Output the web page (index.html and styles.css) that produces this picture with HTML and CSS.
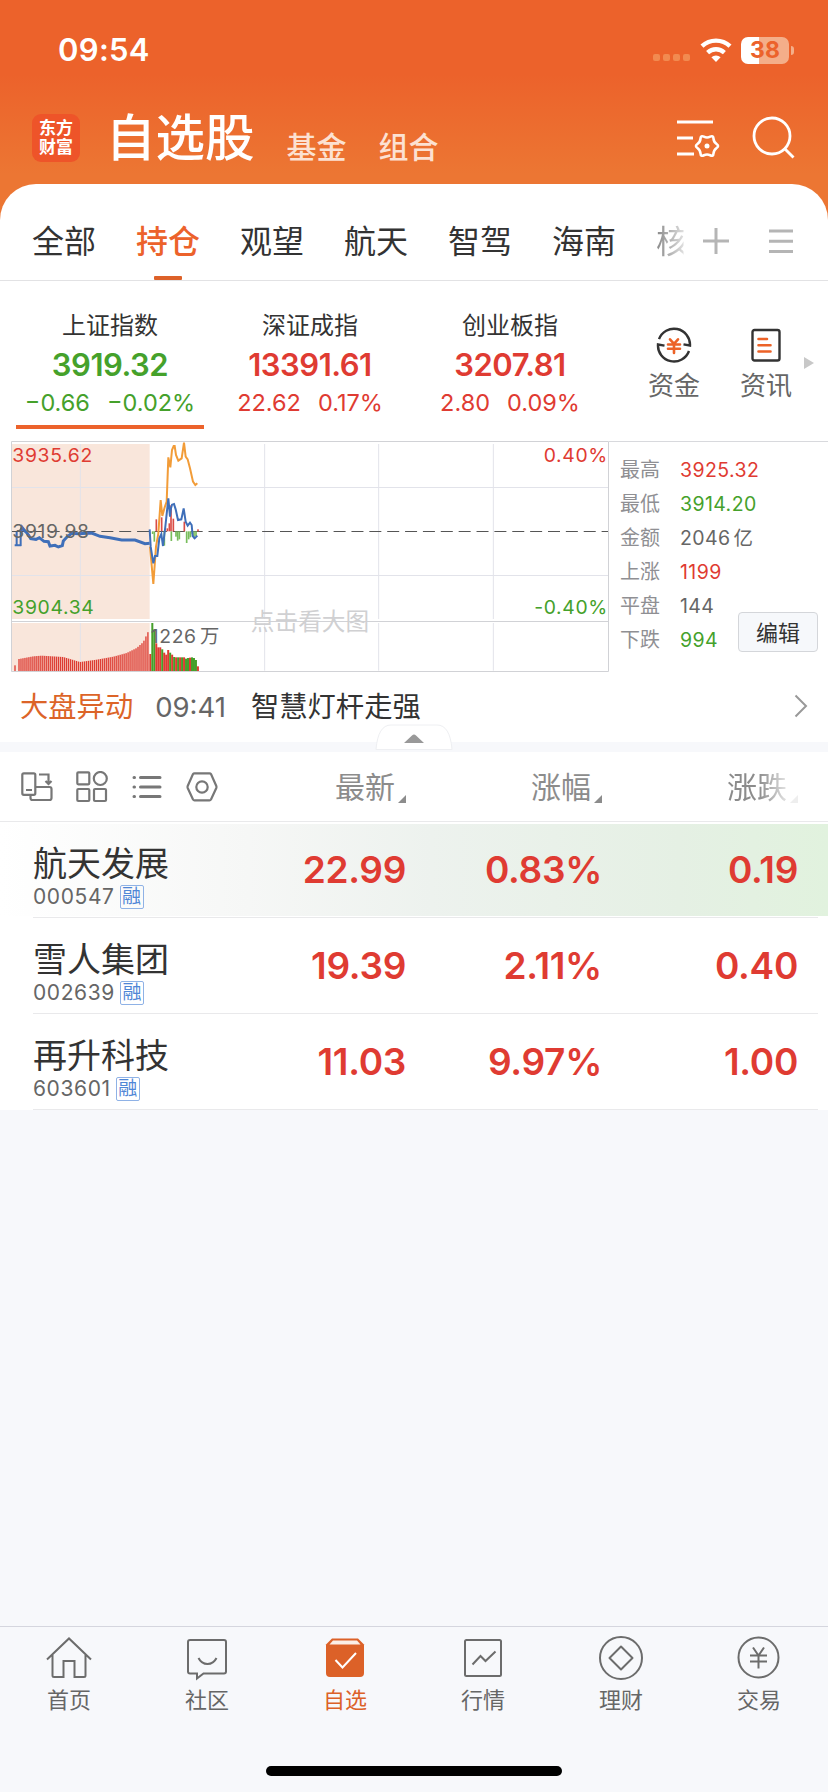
FILE: index.html
```html
<!DOCTYPE html>
<html lang="zh-CN">
<head>
    <meta charset="UTF-8">
    <meta name="viewport" content="width=device-width, initial-scale=1.0">
    <title>自选股</title>
    <link rel="stylesheet" href="styles.css">
</head>
<body>
    <div class="app">
        <header class="header">
            <div class="status-bar">
                <span class="time">09:54</span>
                <div class="status-icons">
                    <svg class="signal" width="38" height="8" viewBox="0 0 38 8"><rect width="7" height="7" rx="2"/><rect x="10" width="7" height="7" rx="2"/><rect x="20" width="7" height="7" rx="2"/><rect x="30" width="7" height="7" rx="2"/></svg>
                    <svg class="wifi" width="32" height="24" viewBox="0 0 32 24">
                        <path d="M2 8.2a20.5 20.5 0 0 1 28 0" fill="none" stroke="#fff" stroke-width="4.4"/>
                        <path d="M7.6 14.6a12.4 12.4 0 0 1 16.8 0" fill="none" stroke="#fff" stroke-width="4.4"/>
                        <path d="M11.4 19.3a6.8 6.8 0 0 1 9.2 0L16 24z" fill="#fff"/>
                    </svg>
                    <div class="battery"><span>38</span></div>
                    <i class="battery-tip"></i>
                </div>
            </div>
            <div class="title-bar">
                <div class="logo">东方<br>财富</div>
                <h1>自选股</h1>
                <a class="nav-link">基金</a>
                <a class="nav-link">组合</a>
                <svg class="settings-icon" width="44" height="40" viewBox="0 0 44 40" fill="none" stroke="#fff" stroke-width="3">
                    <path d="M1 4h36M1 20h16M1 36h17"/>
                    <path d="M40.6 30Q43.5 28 40.6 26Q37.8 24.1 37.5 20.600Q37.3 17.200 34.2 18.700Q31 20.200 27.9 18.700Q24.700 17.200 24.500 20.600Q24.200 24.100 21.400 26Q18.500 28 21.400 30Q24.200 31.900 24.500 35.400Q24.700 38.800 27.900 37.300Q31 35.800 34.200 37.300Q37.300 38.800 37.500 35.400Q37.800 31.900 40.600 30z" stroke-width="2.600"/>
                    <circle cx="31" cy="28" r="2.500" fill="#fff" stroke="none"/>
                </svg>
                <svg class="search-icon" width="44" height="44" viewBox="0 0 44 44" fill="none" stroke="#fff" stroke-width="2.800">
                    <circle cx="21" cy="21" r="18"/>
                    <path d="M33.500 33.500l9 9"/>
                </svg>
            </div>
        </header>

        <main class="panel">
            <nav class="tabs">
                <a>全部</a>
                <a class="active">持仓</a>
                <a>观望</a>
                <a>航天</a>
                <a>智驾</a>
                <a>海南</a>
                <a class="cut">核</a>
                <svg class="plus" width="26" height="26" viewBox="0 0 26 26"><path d="M0 13h26M13 0v26"/></svg>
                <svg class="menu" width="24" height="26" viewBox="0 0 24 26"><path d="M0 3h24M0 13.300h24M0 23.600h24"/></svg>
            </nav>

            <section class="indexes">
                <div class="index down current">
                    <div class="name">上证指数</div>
                    <div class="point">3919.32</div>
                    <div class="change"><span>−0.66</span><span>−0.02%</span></div>
                </div>
                <div class="index up">
                    <div class="name">深证成指</div>
                    <div class="point">13391.61</div>
                    <div class="change"><span>22.62</span><span>0.17%</span></div>
                </div>
                <div class="index up">
                    <div class="name">创业板指</div>
                    <div class="point">3207.81</div>
                    <div class="change"><span>2.80</span><span>0.09%</span></div>
                </div>
                <div class="quick">
                    <svg width="36" height="36" viewBox="0 0 36 36" fill="none" stroke="#333" stroke-width="2.400">
                        <path d="M3 12.200A16 16 0 0 1 34 18.500L27.500 17.400"/>
                        <path d="M33 24A16 16 0 0 1 2 17.500L8.500 18.600"/>
                        <path d="M14 12.300l4 4.500 4-4.500M12 17.500h12M12 21.800h12M18 17v9" stroke="#ec6227" stroke-width="2.600" stroke-linecap="round"/>
                    </svg>
                    <span>资金</span>
                </div>
                <div class="quick">
                    <svg width="36" height="36" viewBox="0 0 36 36" fill="none" stroke="#333" stroke-width="2.400">
                        <rect x="4.500" y="3" width="27" height="30.500" rx="2"/>
                        <path d="M10.500 12h8.500M10.500 18.300h12M10.500 24.500h12" stroke="#ec6227" stroke-width="2.600" stroke-linecap="round"/>
                    </svg>
                    <span>资讯</span>
                </div>
                <i class="more-arrow"></i>
            </section>

            <section class="market">
                <svg class="chart" width="598" height="231" viewBox="33 33 1794 693">
                    <path class="auction" d="M36 42H449V567H36zM36 579H449V722H36z"/>
                    <path class="grid" d="M241 42V567M241 579V722M794 42V567M794 579V722M1136 42V567M1136 579V722M1480 42V567M1480 579V722M36 172.500H1825M36 436.500H1825"/>
                    <path class="frame" d="M34.500 34.500H1825.500V724.500H34.500zM34.500 574.500H1825.500"/>
                    <path class="middle" d="M36 304.500H1824"/>
                    <g id="bars"></g>
                    <polyline class="average" points="450,350 460,462 468,350 475,310 482,210 487,258 494,232 500,215 505,82 511,112 516,60 521,48 524,48 528,75 535,92 545,85 552,38 557,80 563,88 570,115 579,155 586,165 592,160"/>
                    <polyline class="price pre" points="62,304 66,292 74,302 80,308 86,316 92,326 108,328 118,323 132,334 145,335 150,348 165,346 175,351 187,347 190,333 200,322 215,310 235,311 275,309 300,319 330,323 365,330 405,330 435,341 449,340"/>
                    <path class="price" d="M44 346H64M50 348V305M62 348V304"/>
                    <polyline class="price" points="449,298 452,350 460,400 465,378 472,378 478,325 484,312 489,348 496,290 505,205 510,260 513,235 516,224 522,222 527,238 534,270 544,268 551,235 557,275 563,287 570,278 575,285 578,318 584,325 592,317"/>
                    <text class="red" x="37" y="97">3935.62</text>
                    <text class="gray" x="37" y="325">3919.98</text>
                    <text class="green" x="37" y="552">3904.34</text>
                    <text class="red" x="1824" y="97" text-anchor="end">0.40%</text>
                    <text class="green" x="1824" y="552" text-anchor="end">-0.40%</text>
                    <text class="gray" x="452" y="640">1226<tspan dx="10">万</tspan></text>
                    <text class="hint" x="930" y="600" text-anchor="middle">点击看大图</text>
                </svg>
                <div class="stats">
                    <div><label>最高</label><b class="red">3925.32</b></div>
                    <div><label>最低</label><b class="green">3914.20</b></div>
                    <div><label>金额</label><b>2046<em>亿</em></b></div>
                    <div><label>上涨</label><b class="red">1199</b></div>
                    <div><label>平盘</label><b>144</b></div>
                    <div><label>下跌</label><b class="green">994</b></div>
                    <button>编辑</button>
                </div>
            </section>

            <section class="news">
                <span class="news-tag">大盘异动</span>
                <span class="news-time">09:41</span>
                <span class="news-title">智慧灯杆走强</span>
                <svg class="chevron" width="14" height="24" viewBox="0 0 14 24"><path d="M1.500 1.500L12 12 1.500 22.500"/></svg>
            </section>
            <div class="divider">
                <svg class="fold" width="78" height="27" viewBox="0 0 78 27">
                    <path d="M1 25.500Q3 1 16 1H62Q75 1 77 25.500z" fill="#fff" stroke="#eeeff2"/>
                    <path d="M29 19L37 11.500Q39 9.500 41 11.500L49 19z" fill="#999"/>
                </svg>
            </div>

            <section class="toolbar">
                <svg width="32" height="32" viewBox="0 0 32 32">
                    <rect x="1.300" y="2.300" width="13" height="21.500" rx="1.500"/>
                    <path d="M5 19h6M18 3.500h9.500v9M24.500 10l3 3 3-3M14.500 16h14a2 2 0 0 1 2 2v9a2 2 0 0 1-2 2h-17a2 2 0 0 1-2-2v-3"/>
                </svg>
                <svg width="32" height="32" viewBox="0 0 32 32">
                    <rect x="1.300" y="1.300" width="12" height="12" rx="1"/><circle cx="24.300" cy="7.500" r="6.500"/>
                    <rect x="1.300" y="18" width="12" height="12" rx="1"/><rect x="18" y="18" width="12" height="12" rx="1"/>
                </svg>
                <svg class="list" width="32" height="32" viewBox="0 0 32 32"><path d="M3 6.500h.5M3 16h.5M3 25.500h.5M9.500 6.500H29M9.500 16H29M9.500 25.500H29"/></svg>
                <svg width="32" height="32" viewBox="0 0 32 32">
                    <path d="M8.500 2.300H23.500q1 0 1.500.8L30.300 15q.4 1 0 2L25 28.500q-.5.800-1.500.8H8.500q-1 0-1.500-.8L1.700 17q-.4-1 0-2L7 3.100q.5-.8 1.500-.8z"/>
                    <circle cx="16" cy="16" r="5.700"/>
                </svg>
                <span class="col">最新<i></i></span>
                <span class="col">涨幅<i></i></span>
                <span class="col fade">涨跌<i></i></span>
            </section>

            <section class="stocks">
                <div class="stock flash">
                    <div class="stock-name">航天发展<small>000547<i>融</i></small></div>
                    <span>22.99</span><span>0.83%</span><span>0.19</span>
                </div>
                <div class="stock">
                    <div class="stock-name">雪人集团<small>002639<i>融</i></small></div>
                    <span>19.39</span><span>2.11%</span><span>0.40</span>
                </div>
                <div class="stock">
                    <div class="stock-name">再升科技<small>603601<i>融</i></small></div>
                    <span>11.03</span><span>9.97%</span><span>1.00</span>
                </div>
            </section>
        </main>

        <footer class="tab-bar">
            <a>
                <svg width="46" height="46" viewBox="0 0 46 46"><path d="M1 23.500L23 2.500 45 23.500M6.500 19v20.500q0 1.500 1.500 1.500h9.500V25h11v16H38q1.500 0 1.500-1.500V19"/></svg>
                <span>首页</span>
            </a>
            <a>
                <svg width="46" height="46" viewBox="0 0 46 46"><path d="M6 4h34q2 0 2 2v29.500q0 2-2 2H19.500l-6.500 5v-5H6q-2 0-2-2V6q0-2 2-2zM14.500 22q3 6 9 6t9-6"/></svg>
                <span>社区</span>
            </a>
            <a class="active">
                <svg width="46" height="46" viewBox="0 0 46 46">
                    <path class="solid" d="M10 2.500H36L42 8.500V37q0 4-4 4H8q-4 0-4-4V8.500z"/>
                    <path class="lid" d="M11 4.500H35L38.500 8.500H7.500z"/>
                    <path class="check" d="M13.500 24l7 7.500L34 17"/>
                </svg>
                <span>自选</span>
            </a>
            <a>
                <svg width="46" height="46" viewBox="0 0 46 46"><rect x="5" y="4" width="36" height="36" rx="1.500"/><path d="M12.500 28.500l8-8.500 5 5 10-9.500"/></svg>
                <span>行情</span>
            </a>
            <a>
                <svg width="46" height="46" viewBox="0 0 46 46"><circle cx="23" cy="22" r="21"/><path d="M23 10.500L34.500 22 23 33.500 11.500 22z" stroke-linejoin="round"/></svg>
                <span>理财</span>
            </a>
            <a>
                <svg width="46" height="46" viewBox="0 0 46 46"><circle cx="22.500" cy="21.500" r="20"/><path d="M17 11.500l5.500 8 5.500-8M14 19.500h17M14 25.500h17M22.500 19.500v13"/></svg>
                <span>交易</span>
            </a>
        </footer>
        <div class="home-indicator"></div>
    </div>
    <script src="chart.js"></script>
</body>
</html>
```
FILE: styles.css
```css
* {
    box-sizing: border-box;
}
body {
    margin: 0;
    font-family: Inter, "Noto Sans CJK SC", sans-serif;
    background-color: #f7f8fb;
    color: #333;
}
svg {
    display: block;
    flex: none;
}
i, em {
    font-style: normal;
}
.app {
    width: 828px;
    height: 1792px;
    display: flex;
    flex-direction: column;
    background: linear-gradient(#ec622b 0, #ec622b 74px, #ec7633 174px, #ec7633 224px, #f7f8fb 224px);
}
.red {
    color: #df3b32;
    fill: #df3b32;
}
.green {
    color: #45a12b;
    fill: #45a12b;
}

/* header */
.header {
    height: 184px;
    color: #fff;
}
.status-bar {
    height: 100px;
    display: flex;
    justify-content: space-between;
    padding: 0 34px 0 58px;
}
.time {
    font-size: 31px;
    font-weight: 600;
    line-height: 100px;
    letter-spacing: 0.3px;
}
.status-icons {
    display: flex;
    height: 100px;
    align-items: center;
}
.signal {
    fill: #f28a50;
    margin: 16px 9px 0 0;
}
.wifi {
    margin-right: 9px;
}
.battery {
    width: 48px;
    height: 27px;
    border-radius: 7px;
    background: linear-gradient(90deg, #fff 18px, #f4ae89 18px);
    color: #ec622b;
    font-size: 23px;
    font-weight: 700;
    line-height: 27px;
    text-align: center;
}
.battery-tip {
    width: 3px;
    height: 9px;
    margin-left: 2px;
    border-radius: 0 4px 4px 0;
    background: #f4ae89;
}
.title-bar {
    display: flex;
    height: 84px;
    padding: 0 33px 0 32px;
}
.logo {
    width: 48px;
    height: 48px;
    margin-top: 14px;
    padding-top: 5px;
    border-radius: 9px;
    background: #ee5429;
    font-size: 17px;
    font-weight: 700;
    line-height: 19px;
    text-align: center;
}
h1 {
    margin: 2px 0 0 26px;
    font-size: 49.5px;
    font-weight: 500;
    line-height: 72px;
}
.nav-link {
    margin-left: 32px;
    padding-top: 27px;
    font-size: 30px;
    font-weight: 500;
    line-height: 40px;
    color: #fce1d2;
}
.settings-icon {
    margin: 18px 31px 0 auto;
}
.search-icon {
    margin-top: 15px;
}

/* group tabs */
.panel {
    flex: 1;
    border-radius: 36px 36px 0 0;
    background: linear-gradient(#fff 926px, #f7f8fb 926px);
}
.tabs {
    height: 97px;
    display: flex;
    align-items: center;
    gap: 40px;
    padding: 20px 36px 0 32px;
    border-bottom: 1px solid #e2e2e4;
    font-size: 32px;
    line-height: 76px;
    white-space: nowrap;
}
.tabs a {
    flex: none;
}
.tabs .active {
    position: relative;
    color: #ec622b;
    font-weight: 500;
}
.tabs .active::after {
    content: "";
    position: absolute;
    left: 18px;
    bottom: 0;
    width: 28px;
    height: 4px;
    border-radius: 1px;
    background: #dd6129;
}
.tabs .cut {
    margin-right: -25px;
    background: linear-gradient(90deg, #888, #ddd 27px, #fff 28px);
    -webkit-background-clip: text;
    background-clip: text;
    color: transparent;
}
.tabs svg {
    fill: none;
    stroke: #b5b5b5;
    stroke-width: 3;
}
.plus {
    margin-bottom: 3px;
}
.menu {
    margin: 0 0 3px auto;
}

/* index quotes */
.indexes {
    display: flex;
    height: 160px;
    padding-left: 10px;
}
.index {
    width: 200px;
    text-align: center;
    padding-top: 27px;
}
.index .name {
    font-size: 24px;
    line-height: 36px;
}
.index .point {
    font-size: 31px;
    font-weight: 600;
    line-height: 42px;
    letter-spacing: -0.5px;
}
.index .change {
    display: flex;
    justify-content: center;
    gap: 17px;
    font-size: 23.5px;
    line-height: 34px;
}
.index.up .point, .index.up .change {
    color: #df3b32;
}
.index.down .point, .index.down .change {
    color: #45a12b;
}
.index.current::after {
    content: "";
    display: block;
    width: 188px;
    height: 4px;
    margin: 5px auto 0 6px;
    background: #ec622b;
}
.quick {
    width: 92px;
    padding-top: 46px;
    color: #666;
    font-size: 26px;
    line-height: 40px;
    text-align: center;
}
.index + .quick {
    margin-left: 18px;
}
.quick svg {
    margin: 0 auto 3px;
}
.more-arrow {
    margin: 76px 0 0 -8px;
    width: 0;
    height: 0;
    border-left: 10px solid #c8c8c8;
    border-top: 6px solid transparent;
    border-bottom: 6px solid transparent;
}

/* minute chart */
.market {
    display: flex;
    height: 231px;
    padding-left: 11px;
}
.chart path, .chart polyline {
    fill: none;
}
.chart .auction {
    fill: #f9e6db;
}
.chart .grid {
    stroke: #e2e3ea;
    stroke-width: 3;
}
.chart .frame {
    stroke: #d1d2d6;
    stroke-width: 3;
}
.chart .middle {
    stroke: #555;
    stroke-width: 3;
    stroke-dasharray: 36 17.6;
}
.chart .average {
    stroke: #f29c38;
    stroke-width: 6;
}
.chart .price {
    stroke: #3f6fb9;
    stroke-width: 6;
}
.chart .pre {
    stroke-width: 9;
}
.chart text {
    font-size: 58px;
    letter-spacing: 2px;
}
.chart .gray {
    fill: #666;
}
.chart .hint {
    fill: #d0d0d2;
    font-size: 71px;
    letter-spacing: 0;
}
.stats {
    flex: 1;
    position: relative;
    padding: 11px 0 0 11px;
    border-top: 1px solid #d8d9dd;
}
.stats div {
    display: flex;
    height: 34px;
    line-height: 34px;
}
.stats label {
    width: 60px;
    font-size: 20px;
    color: #8f8f93;
}
.stats b {
    font-size: 19.5px;
    font-weight: 400;
    letter-spacing: 0.4px;
}
.stats b:not([class]) {
    color: #666;
}
.stats em {
    margin-left: 3px;
}
.stats button {
    position: absolute;
    right: 10px;
    top: 170px;
    width: 80px;
    height: 40px;
    padding: 0 0 3px;
    border: 1px solid #d4d6da;
    border-radius: 4px;
    background: #f6f8fb;
    color: #333;
    font: inherit;
    font-size: 22px;
}

/* market news */
.news {
    display: flex;
    height: 70px;
    padding: 0 20px 0 20px;
    font-size: 28.3px;
    line-height: 70px;
}
.news-tag {
    color: #dc6428;
}
.news-time {
    margin: 0 25px 0 22px;
    font-size: 27.5px;
    color: #666;
}
.chevron {
    margin: 22px 0 0 auto;
    fill: none;
    stroke: #999;
    stroke-width: 2;
}
.divider {
    position: relative;
    height: 10px;
    background: #f7f8fb;
}
.fold {
    position: absolute;
    left: 375px;
    top: -18px;
}

/* list toolbar */
.toolbar {
    display: flex;
    align-items: center;
    height: 70px;
    padding-left: 21px;
    border-bottom: 1px solid #e9e9eb;
}
.toolbar svg {
    margin-right: 23px;
    fill: none;
    stroke: #777;
    stroke-width: 2.2;
}
.toolbar .list {
    stroke-width: 3;
    stroke-linecap: round;
}
.col {
    display: flex;
    justify-content: flex-end;
    width: 196px;
    color: #8c8c8c;
    font-size: 30px;
    line-height: 70px;
}
.toolbar svg + .col {
    width: 165px;
}
.col i {
    align-self: flex-end;
    margin: 0 0 19px 3px;
    border-left: 8px solid transparent;
    border-bottom: 8px solid #8c8c8c;
}
.fade {
    -webkit-mask-image: linear-gradient(90deg, #000 80%, rgba(0,0,0,0.15) 96%);
    mask-image: linear-gradient(90deg, #000 80%, rgba(0,0,0,0.15) 96%);
}

/* stocks */
.stock {
    position: relative;
    display: flex;
    height: 96px;
    padding-left: 33px;
}
.stock::after {
    content: "";
    position: absolute;
    left: 33px;
    right: 10px;
    bottom: 0;
    height: 1px;
    background: #e9e9eb;
}
.flash {
    background: linear-gradient(90deg, #fff 0, #f6f7f6 30%, #edf2ee 52%, #e5f0e4 82%, #e1f2de 100%) 0 2px / 100% 92px no-repeat;
}
.stock-name {
    width: 177px;
    padding-top: 22px;
    font-size: 34px;
    line-height: 40px;
}
.stock small {
    display: flex;
    align-items: center;
    height: 26px;
    font-size: 21px;
    line-height: 26px;
    letter-spacing: 0.6px;
    color: #666;
}
.stock small i {
    width: 24px;
    height: 24px;
    margin-left: 5px;
    border: 1px solid #8fb2e6;
    border-radius: 2px;
    color: #4f86d6;
    font-size: 19px;
    line-height: 22px;
    letter-spacing: 0;
    text-align: center;
}
.stock span {
    width: 196px;
    color: #df3b32;
    font-size: 37px;
    font-weight: 600;
    line-height: 96px;
    letter-spacing: -0.3px;
    text-align: right;
}

/* bottom bar */
.tab-bar {
    display: flex;
    height: 140px;
    border-top: 1px solid #d5d6de;
    background: #f7f8fb;
}
.tab-bar a {
    flex: 1;
    padding-top: 9px;
    color: #666;
    font-size: 22px;
    line-height: 37px;
    text-align: center;
}
.tab-bar svg {
    margin: 0 auto;
    fill: none;
    stroke: #6c6c6c;
    stroke-width: 2;
}
.tab-bar .active {
    color: #dc6128;
}
.tab-bar .solid {
    fill: #dc6128;
    stroke: none;
}
.tab-bar .lid {
    fill: #fbeee6;
    stroke: none;
}
.tab-bar .check {
    stroke: #fff;
}
.home-indicator {
    width: 296px;
    height: 10px;
    margin: 0 auto 16px;
    border-radius: 5px;
    background: #000;
}
```
FILE: chart.js
```js
const bars = document.getElementById('bars');

function bar(x, y1, y2, color, width) {
    const rect = document.createElementNS('http://www.w3.org/2000/svg', 'rect');
    rect.setAttribute('x', x - width / 2);
    rect.setAttribute('y', Math.min(y1, y2));
    rect.setAttribute('width', width);
    rect.setAttribute('height', Math.abs(y2 - y1));
    rect.setAttribute('fill', color);
    bars.appendChild(rect);
}

const red = '#dd3c33';
const green = '#459f2a';
const bottom = 723;

// 集合竞价成交量
const curve = [[57, 687], [100, 679], [125, 677], [190, 681], [240, 696], [290, 689], [340, 680], [380, 669], [410, 654], [430, 636], [444, 606]];
bar(45, 706, bottom, red, 4);
for (let x = 57; x < 447; x += 5.95) {
    const i = Math.max(1, curve.findIndex(p => p[0] >= x));
    const [x0, y0] = curve[i - 1];
    const [x1, y1] = curve[i];
    bar(x, y0 + (y1 - y0) * (x - x0) / (x1 - x0), bottom, red, 4);
}

// 盘中成交量
const tops = [672, 579, 598, 640, 652, 652, 658, 668, 674, 660, 668, 674, 681, 682, 682, 682, 682, 682, 686, 684, 683, 682, 684, 690, 709];
const colors = 'rggrrrgrrrgrgrgrgrggrgggr';
tops.forEach((y, i) => bar(451 + i * 5.95, y, bottom, colors[i] === 'r' ? red : green, 6));

// 红绿柱
[[469, 268], [485, 262], [508, 280], [513, 226], [520, 266], [553, 275], [594, 298], [502, 295]].forEach(([x, y]) => bar(x, y, 304, '#d94c46', 5));
[[458, 312], [463, 335], [493, 347], [514, 333], [528, 320], [533, 332], [538, 328], [560, 339], [566, 328], [571, 322], [577, 312], [582, 325], [588, 318]].forEach(([x, y]) => bar(x, 304, y, '#78bd5c', 5));
```
